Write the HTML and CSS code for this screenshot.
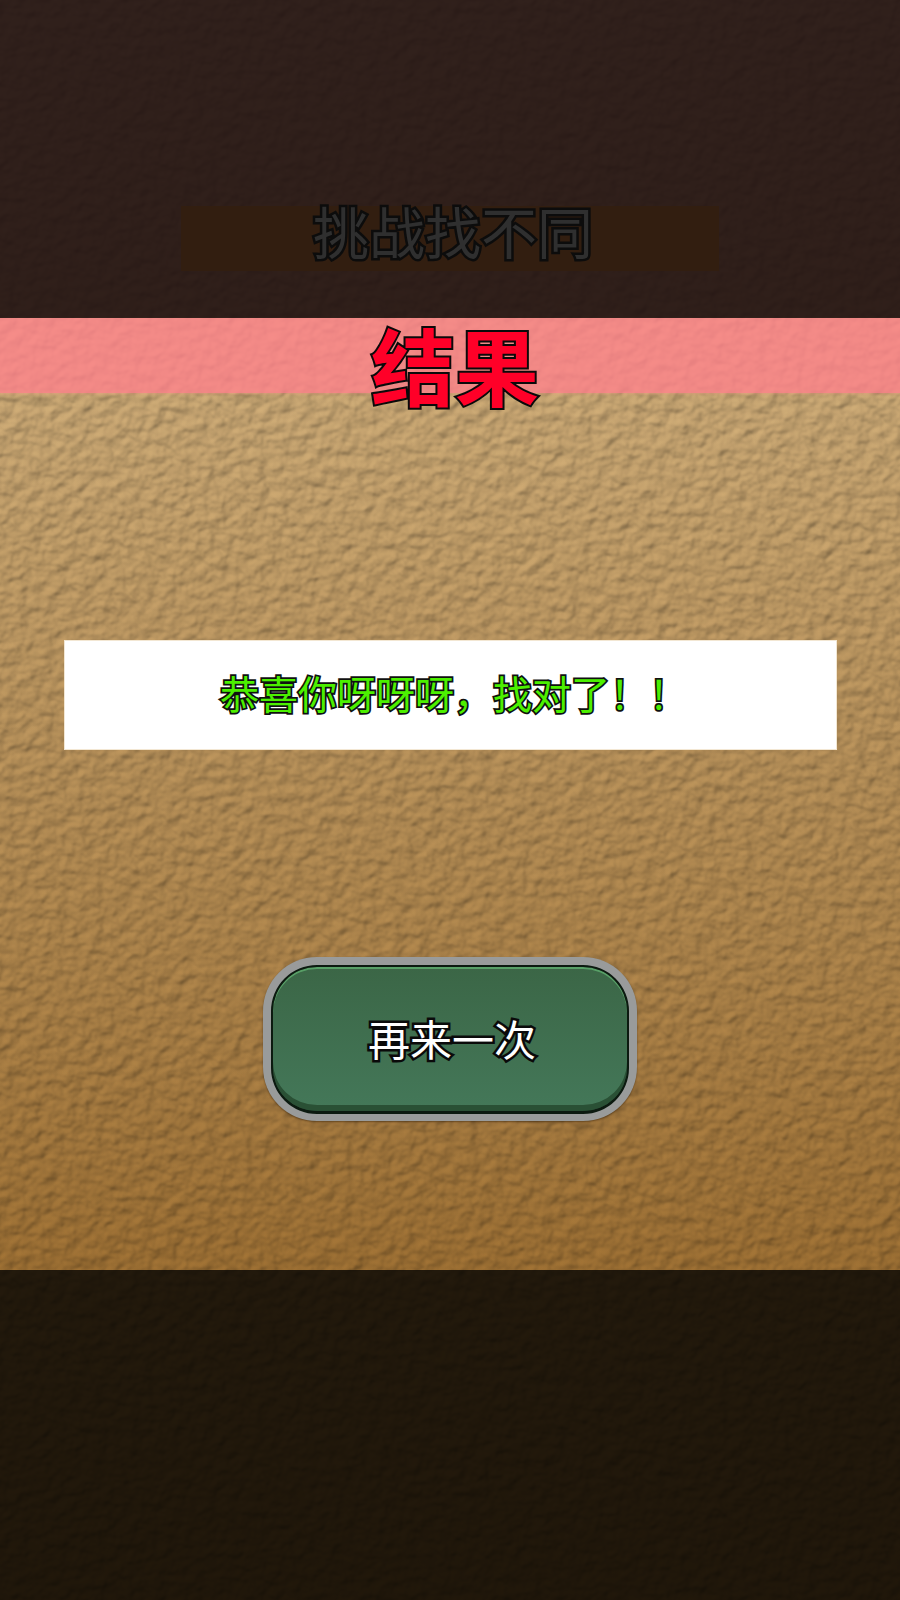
FILE: index.html
```html
<!DOCTYPE html>
<html lang="zh">
<head>
<meta charset="utf-8">
<title>挑战找不同</title>
<link rel="stylesheet" href="styles.css">
</head>
<body>
<div class="page">
  <svg class="texture" width="900" height="1600" aria-hidden="true">
    <defs>
      <linearGradient id="base" x1="0" y1="0" x2="0" y2="1">
        <stop offset="0" stop-color="#cdb184"/>
        <stop offset="0.25" stop-color="#bf9f6e"/>
        <stop offset="0.8" stop-color="#93682f"/>
        <stop offset="1" stop-color="#8a5f28"/>
      </linearGradient>
      <filter id="paper" x="-2%" y="-2%" width="104%" height="104%" color-interpolation-filters="sRGB">
        <feTurbulence type="fractalNoise" baseFrequency="0.08 0.095" numOctaves="3" seed="11" result="noise"/>
        <feGaussianBlur in="noise" stdDeviation="1.2" result="soft"/>
        <feDiffuseLighting in="soft" surfaceScale="2" diffuseConstant="0.85" lighting-color="#ffffff" result="light">
          <feDistantLight azimuth="235" elevation="65"/>
        </feDiffuseLighting>
        <feComposite in="SourceGraphic" in2="light" operator="arithmetic" k1="1.3" k2="0" k3="0" k4="0"/>
      </filter>
    </defs>
    <rect x="-20" y="-20" width="940" height="1640" fill="url(#base)" filter="url(#paper)"/>
  </svg>
  <header class="top">
    <h1 class="game-title">挑战找不同</h1>
  </header>
  <section class="result-bar">
    <h2 class="result-title">结果</h2>
  </section>
  <main class="content">
    <div class="message"><p class="message-text">恭喜你呀呀呀，找对了！！</p></div>
    <button class="again" type="button"><span class="again-face">再来一次</span></button>
  </main>
  <footer class="bottom"></footer>
</div>
</body>
</html>
```
FILE: styles.css
```css
* { box-sizing: border-box; }
html, body { margin: 0; padding: 0; }
body { background: #1e150c; font-family: "Noto Sans CJK SC", "Liberation Sans", sans-serif; }
.page { position: relative; width: 900px; height: 1600px; overflow: hidden; display: flex; flex-direction: column; }
.texture { position: absolute; inset: 0; display: block; }
.top, .result-bar, .content, .bottom { position: relative; }
.top { height: 318px; padding-top: 206px; background: rgba(30, 15, 15, 0.9); }
.game-title { margin: 0 auto; width: 538px; height: 65px; background: #321e10; color: #2f2f2f; font-size: 56px; font-weight: 400; line-height: 48px; text-align: center; padding-left: 6px; -webkit-text-stroke: 5px #0c0c0c; paint-order: stroke fill; }
.result-bar { height: 75px; background: rgba(255, 130, 140, 0.78); box-shadow: 0 1px 2px rgba(255, 150, 140, 0.35); }
.result-title { position: relative; z-index: 1; margin: 0; padding-left: 10px; color: #ff0028; font-size: 84px; font-weight: 700; line-height: 92px; text-align: center; -webkit-text-stroke: 4px #0a0a0a; paint-order: stroke fill; }
.content { flex: 1; display: flex; flex-direction: column; align-items: center; padding-top: 247px; }
.message { width: 773px; height: 110px; display: flex; align-items: center; justify-content: center; background: #fff; outline: 1px solid rgba(240, 225, 200, 0.8); outline-offset: -1px; }
.message-text { margin: 0 0 6px 8px; color: #4cf000; font-size: 39px; font-weight: 400; line-height: 54px; -webkit-text-stroke: 3.5px #101010; paint-order: stroke fill; }
.again { display: block; margin-top: 207px; width: 374px; height: 164px; padding: 8px 8px 7px; border: 0; border-radius: 54px; background: #999b9b; box-shadow: 0 1px 2px rgba(40, 20, 0, 0.5); }
.again-face { display: flex; align-items: center; justify-content: center; width: 100%; height: 100%; padding-left: 4px; padding-bottom: 2px; border: 2px solid #0c1a10; border-bottom-width: 3px; border-radius: 46px; background: linear-gradient(#3b6646, #447859); box-shadow: inset 0 2px 0 #58a067, inset 0 -6px 0 #2a5035; color: #fff; font-family: "Noto Sans CJK SC", sans-serif; font-size: 42px; line-height: 50px; -webkit-text-stroke: 5px #0a0a0a; paint-order: stroke fill; }
.bottom { height: 330px; background: rgba(4, 4, 2, 0.8); }
```
